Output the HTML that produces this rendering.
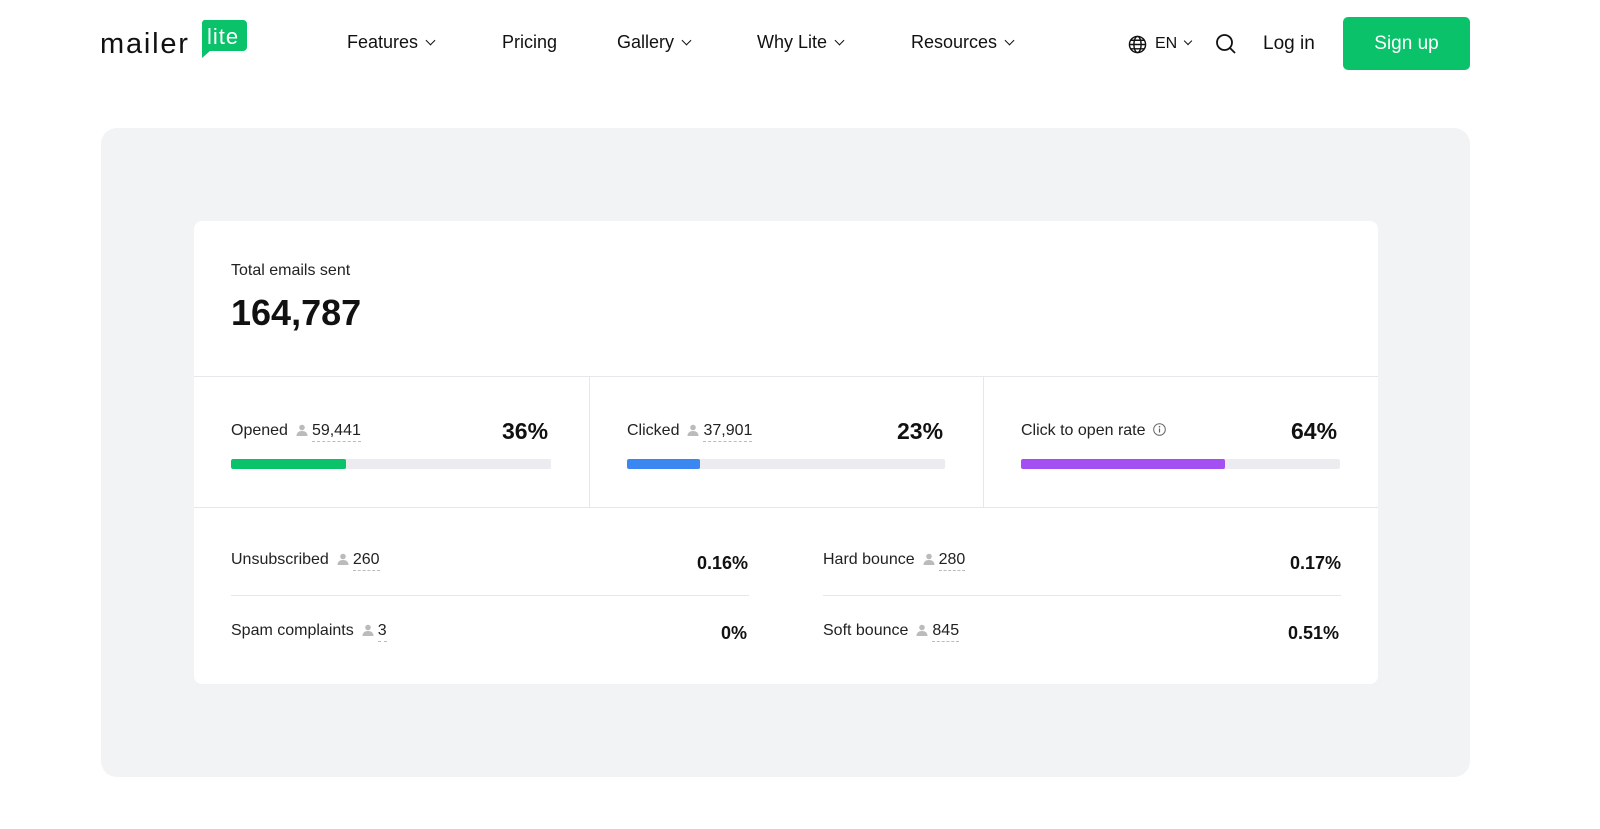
<!DOCTYPE html>
<html><head><style>
*{box-sizing:border-box;margin:0;padding:0}
body{width:1600px;height:829px;background:#fff;font-family:"Liberation Sans",sans-serif;color:#111;position:relative;overflow:hidden}
.a{position:absolute;white-space:nowrap}
.nav{font-size:18px;color:#111;top:32px}
.chev{display:inline-block;width:7px;height:7px;border-right:1.8px solid #111;border-bottom:1.8px solid #111;transform:rotate(45deg);margin-left:9px;position:relative;top:-4px}
.panel{left:101px;top:128px;width:1369px;height:649px;background:#f2f3f5;border-radius:16px}
.card{left:194px;top:221px;width:1184px;height:463px;background:#fff;border-radius:8px}
.hl{height:1px;background:#e6e7ea}
.lbl{font-size:16px;color:#222}
.num{border-bottom:1.5px dashed #bbb;padding-bottom:2px}
.pi{display:inline-block;width:12px;height:12px;vertical-align:-1px;margin:0 4px 0 8px}
.pct{font-size:23px;font-weight:bold}
.spct{font-size:18px;font-weight:bold}
.bar{height:10px;background:#ebebf0;border-radius:2px;overflow:hidden}
.bar div{height:100%;border-radius:2px}
</style></head><body>
<div class="a" style="left:100px;top:28px;font-size:29px;color:#111;letter-spacing:1.8px">mailer</div>
<svg class="a" style="left:200px;top:20px" width="47" height="38" viewBox="0 0 47 38"><path d="M4 0H43a4 4 0 0 1 4 4V27a4 4 0 0 1-4 4H10L2 38V4a4 4 0 0 1 2-4z" fill="#09c269"/><text x="7" y="24" font-family="Liberation Sans" font-size="22" fill="#fff" letter-spacing="1">lite</text></svg>
<div class="a nav" style="left:347px">Features<span class="chev"></span></div>
<div class="a nav" style="left:502px">Pricing</div>
<div class="a nav" style="left:617px">Gallery<span class="chev"></span></div>
<div class="a nav" style="left:757px">Why Lite<span class="chev"></span></div>
<div class="a nav" style="left:911px">Resources<span class="chev"></span></div>
<svg class="a" style="left:1128px;top:35px" width="19" height="19" viewBox="0 0 20 20" fill="none" stroke="#111" stroke-width="1.5"><circle cx="10" cy="10" r="8.5"/><ellipse cx="10" cy="10" rx="3.8" ry="8.5"/><path d="M1.5 10h17M3 5.5h14M3 14.5h14"/></svg>
<div class="a nav" style="left:1155px;top:35px;font-size:16px">EN<span class="chev" style="width:6px;height:6px;margin-left:8px"></span></div>
<svg class="a" style="left:1215px;top:33px" width="22" height="22" viewBox="0 0 22 22" fill="none" stroke="#111" stroke-width="1.8"><circle cx="9.5" cy="9.5" r="7.5"/><path d="M15 15l5 5"/></svg>
<div class="a nav" style="left:1263px;top:33px;font-size:19px">Log in</div>
<div class="a" style="left:1343px;top:17px;width:127px;height:53px;background:#09c269;border-radius:5px;color:#fff;font-size:19px;text-align:center;line-height:53px">Sign up</div>

<div class="a panel"></div>
<div class="a card"></div>
<div class="a lbl" style="left:231px;top:262px;font-size:16px">Total emails sent</div>
<div class="a" style="left:231px;top:292px;font-size:36px;font-weight:bold">164,787</div>
<div class="a hl" style="left:194px;top:376px;width:1184px"></div>
<div class="a hl" style="left:194px;top:507px;width:1184px"></div>
<div class="a" style="left:589px;top:377px;width:1px;height:130px;background:#e6e7ea"></div>
<div class="a" style="left:983px;top:377px;width:1px;height:130px;background:#e6e7ea"></div>

<svg width="0" height="0" style="position:absolute"><defs><symbol id="p" viewBox="0 0 12 12"><circle cx="6" cy="3.5" r="2.8" fill="#bbb"/><path d="M0.5 12c0-3.5 2.5-5 5.5-5s5.5 1.5 5.5 5z" fill="#bbb"/></symbol></defs></svg>

<div class="a lbl" style="left:231px;top:422px">Opened<svg class="pi"><use href="#p"/></svg><span class="num">59,441</span></div>
<div class="a pct" style="left:502px;top:418px">36%</div>
<div class="a bar" style="left:231px;top:459px;width:320px"><div style="width:115px;background:#09c269"></div></div>

<div class="a lbl" style="left:627px;top:422px">Clicked<svg class="pi"><use href="#p"/></svg><span class="num">37,901</span></div>
<div class="a pct" style="left:897px;top:418px">23%</div>
<div class="a bar" style="left:627px;top:459px;width:318px"><div style="width:73px;background:#3b87f1"></div></div>

<div class="a lbl" style="left:1021px;top:422px">Click to open rate <svg width="13" height="13" viewBox="0 0 13 13" style="vertical-align:-1px;margin-left:3px"><circle cx="6.5" cy="6.5" r="5.8" fill="none" stroke="#666" stroke-width="1"/><path d="M6.5 5.5v4" stroke="#666" stroke-width="1.2"/><circle cx="6.5" cy="3.7" r=".8" fill="#666"/></svg></div>
<div class="a pct" style="left:1291px;top:418px">64%</div>
<div class="a bar" style="left:1021px;top:459px;width:319px"><div style="width:204px;background:#a34ff2"></div></div>

<div class="a lbl" style="left:231px;top:551px">Unsubscribed<svg class="pi"><use href="#p"/></svg><span class="num">260</span></div>
<div class="a spct" style="left:697px;top:553px">0.16%</div>
<div class="a hl" style="left:231px;top:595px;width:518px"></div>
<div class="a lbl" style="left:231px;top:622px">Spam complaints<svg class="pi"><use href="#p"/></svg><span class="num">3</span></div>
<div class="a spct" style="left:721px;top:623px">0%</div>

<div class="a lbl" style="left:823px;top:551px">Hard bounce<svg class="pi"><use href="#p"/></svg><span class="num">280</span></div>
<div class="a spct" style="left:1290px;top:553px">0.17%</div>
<div class="a hl" style="left:823px;top:595px;width:518px"></div>
<div class="a lbl" style="left:823px;top:622px">Soft bounce<svg class="pi"><use href="#p"/></svg><span class="num">845</span></div>
<div class="a spct" style="left:1288px;top:623px">0.51%</div>
</body></html>
